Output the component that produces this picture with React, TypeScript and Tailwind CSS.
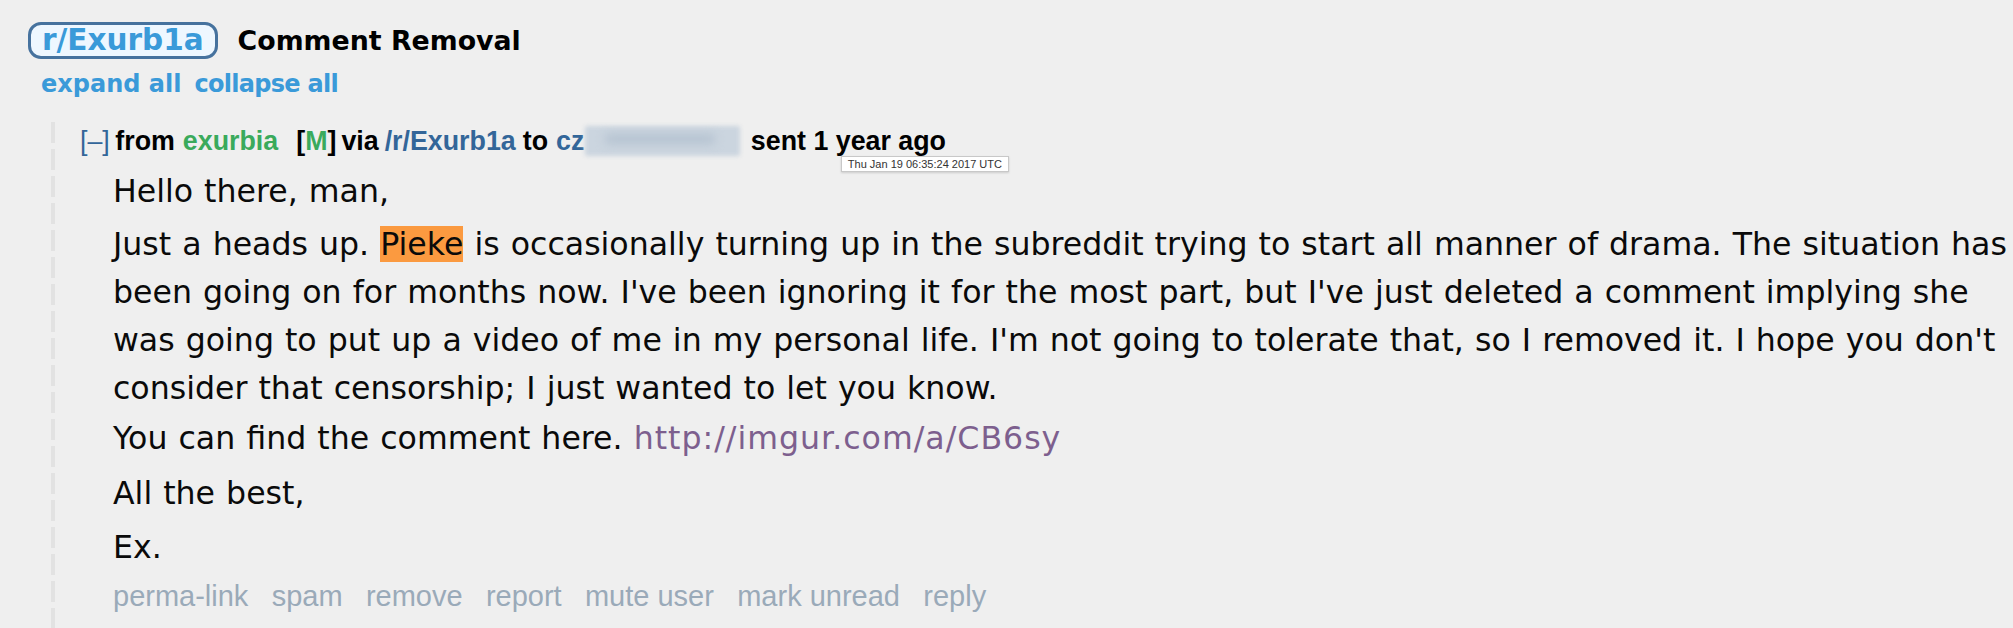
import React from "react";

const verdana = { fontFamily: '"DejaVu Sans", Verdana, sans-serif' };
const arial = { fontFamily: '"Liberation Sans", Arial, sans-serif' };

export default function App() {
  return (
    <div className="min-h-screen w-full overflow-hidden bg-[#efefef] text-[#111]">
      {/* header */}
      <div className="flex items-center pl-[28px] pt-[22px]" style={verdana}>
        <div className="flex h-[37px] items-center rounded-[13px] border-[3px] border-[#46729e] bg-[#eef7ff] px-[11px] text-[29.5px] font-bold leading-[31px] text-[#3a9ad9]">
          r/Exurb1a
        </div>
        <div className="ml-[20px] text-[26.8px] font-bold leading-[37px] text-black">Comment Removal</div>
      </div>
      <div className="mt-[9.5px] flex gap-[13px] pl-[41px] text-[24px] font-bold leading-[30px] text-[#3a9ad9]" style={verdana}>
        <span>expand all</span>
        <span className="tracking-[-0.7px]">collapse all</span>
      </div>

      {/* message */}
      <div className="ml-[51px] mt-[23.5px] flex">
        <div className="w-[4px] shrink-0 bg-[repeating-linear-gradient(to_bottom,#e2e2e2_0px,#e2e2e2_21px,transparent_21px,transparent_27px)]" />
        <div className="pl-[25px] pt-[2px]">
          <div className="relative flex items-center whitespace-nowrap text-[26.8px] font-bold leading-[34px]" style={arial}>
            <span className="text-[#336699] font-normal">[–]</span>
            <span className="ml-[5.5px] text-black">from</span>
            <span className="ml-[8px] text-[#3aaa5c]">exurbia</span>
            <span className="ml-[18px] text-black">
              [<span className="text-[#3aaa5c]">M</span>]
            </span>
            <span className="ml-[5px] text-black">via</span>
            <span className="ml-[6px] text-[#336699]">/r/Exurb1a</span>
            <span className="ml-[7px] text-black">to</span>
            <span className="ml-[8px] text-[#336699]">cz</span>
            <span className="relative ml-[1px] h-[30px] w-[155px]">
              <span className="absolute inset-0 rounded-[2px] bg-[#cbd5df] blur-[2px]" />
              <span className="absolute left-[20px] top-[8px] h-[10px] w-[110px] rounded bg-[#b5c3d1] blur-[5px]" />
            </span>
            <span className="relative ml-[10.5px] text-black">
              sent 1 year ago
              <span
                className="absolute left-[90px] top-[32px] whitespace-nowrap border border-[#c8c8c8] bg-white px-[6px] text-[11px] font-normal leading-[14px] text-[#333] shadow-[0_1px_2px_rgba(0,0,0,0.15)]"
                style={arial}
              >
                Thu Jan 19 06:35:24 2017 UTC
              </span>
            </span>
          </div>

          <div className="ml-[33px] mt-[9px] whitespace-nowrap text-[31.6px] leading-[48px] text-[#0a0a0a] [word-spacing:1px]" style={verdana}>
            <p>Hello there, man,</p>
            <p className="mt-[5px]">
              Just a heads up. <span className="bg-[#fb9a40]">Pieke</span> is occasionally turning up in the subreddit trying to start all manner of drama. The situation has
              <br />
              been going on for months now. I've been ignoring it for the most part, but I've just deleted a comment implying she
              <br />
              was going to put up a video of me in my personal life. I'm not going to tolerate that, so I removed it. I hope you don't
              <br />
              consider that censorship; I just wanted to let you know.
            </p>
            <p className="mt-[2px]">
              You can find the comment here. <span className="tracking-[1px] text-[#7d5f8e]">http://imgur.com/a/CB6sy</span>
            </p>
            <p className="mt-[7px]">All the best,</p>
            <p className="mt-[6px]">Ex.</p>
          </div>

          <div className="ml-[33px] mt-[7px] flex gap-[23.3px] whitespace-nowrap pb-[20px] text-[29px] leading-[36px] text-[#9aaab9]" style={arial}>
            <span>perma-link</span>
            <span>spam</span>
            <span>remove</span>
            <span>report</span>
            <span>mute user</span>
            <span>mark unread</span>
            <span>reply</span>
          </div>
        </div>
      </div>
    </div>
  );
}
